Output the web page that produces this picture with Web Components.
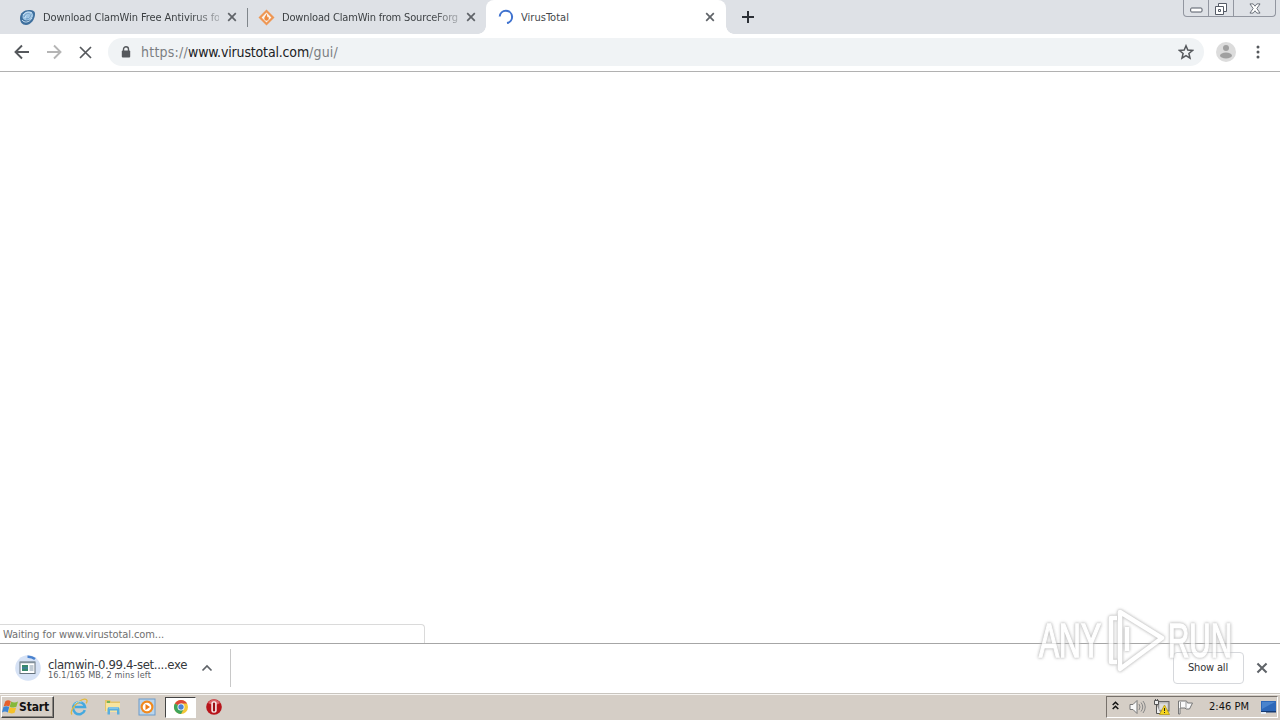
<!DOCTYPE html>
<html lang="en"><head><meta charset="utf-8"><title>VirusTotal</title>
<style>html,body{margin:0;width:1280px;height:720px;overflow:hidden;font-family:"DejaVu Sans Condensed","DejaVu Sans",sans-serif}body{font-stretch:condensed}</style></head>
<body><desktop-screen></desktop-screen>
<script>
const define=(name,html,ready)=>customElements.define(name,class extends HTMLElement{
  connectedCallback(){ if(this.shadowRoot)return;
    const t=document.createElement('template');t.innerHTML=html;
    this.attachShadow({mode:'open'}).append(t.content.cloneNode(true));
    if(ready)ready(this); }
});
/* A single line of text tracked to a given width. */
define('fit-text','<style>:host{display:block;white-space:pre;line-height:1.2}span{display:inline-block}</style><span><slot></slot></span>',el=>{
  const s=el.shadowRoot.querySelector('span'),w=+el.getAttribute('w');
  const n=el.textContent.length; const cur=s.getBoundingClientRect().width;
  s.style.letterSpacing=((w-cur)/n)+'px';
});
const icons={
 close:['0 0 10 10','<path d="M1.2 1.2 8.8 8.8M8.8 1.2 1.2 8.8" stroke="currentColor" stroke-width="1.7" fill="none"/>'],
 stop:['0 0 13 13','<path d="M1 1 12 12M12 1 1 12" stroke="currentColor" stroke-width="1.7" fill="none"/>'],
 plus:['0 0 12 12','<path d="M6 0V12M0 6H12" stroke="currentColor" stroke-width="2"/>'],
 back:['0 0 16 16','<path d="M15 8H2M8 1.5 1.5 8 8 14.5" fill="none" stroke="currentColor" stroke-width="1.9"/>'],
 forward:['0 0 16 16','<path d="M1 8H14M8 1.5 14.5 8 8 14.5" fill="none" stroke="currentColor" stroke-width="1.9"/>'],
 lock:['0 0 10 13','<path d="M2.5 5V3.3a2.5 2.5 0 0 1 5 0V5" fill="none" stroke="currentColor" stroke-width="1.4"/><rect x=".8" y="4.6" width="8.4" height="7" rx="1" fill="currentColor"/>'],
 star:['0 0 16 16','<path d="m8 1.8 1.8 4.3 4.7.4-3.6 3 1.1 4.6L8 11.6l-4 2.5 1.1-4.6-3.6-3 4.7-.4z" fill="none" stroke="currentColor" stroke-width="1.5"/>'],
 user:['0 0 20 20','<circle cx="10" cy="10" r="10" fill="#dcdcdc"/><circle cx="10" cy="6" r="3" fill="#a0a0a0"/><ellipse cx="10" cy="13.5" rx="6" ry="3" fill="#a0a0a0"/>'],
 dots:['0 0 4 14','<g fill="currentColor"><circle cx="2" cy="2" r="1.5"/><circle cx="2" cy="7" r="1.5"/><circle cx="2" cy="12" r="1.5"/></g>'],
 up:['0 0 12 8','<path d="m1.5 6.5 4.5-4.5 4.5 4.5" fill="none" stroke="currentColor" stroke-width="1.7"/>'],
 spin:['0 0 16 16','<path d="M1.7 7.5A6.2 6.2 0 1 1 9 14.1" fill="none" stroke="#3f72cf" stroke-width="2"/>'],
 clam:['0 0 17 17','<path d="M1 9C1 4 5 1 10 1c4 0 6 1 6 4 0 5-4 11-9 11-4 0-6-3-6-7z" fill="#3e6f9d"/><path d="M3.500 8c0-4 4.500-6 8.500-5 4 2 2 7-2 8-3 1-6.500 0-6.500-3z" fill="#9dc4e4"/><path d="M3 11c2 3 7 3 10-2M6 9c0-3 3-5 5-4s1 4-2 4M4 6c2-3 6-4 9-2" stroke="#d3e8f8" fill="none" stroke-width=".9"/><path d="M5 8c1-3 4-4 6-3M7 10c3 0 5-2 5-5" stroke="#5a8db9" fill="none" stroke-width=".8"/>'],
 forge:['0 0 17 17','<path d="M8.5.5 16.5 8.5l-8 8-8-8z" fill="#ee9755"/><path d="m8.5 3.6 4.9 4.9-4.9 4.9-4.9-4.9z" fill="#faf4ee"/><path d="M8.7 4.5c-.4 2-2.5 3-2.4 5 .1 1.4 1 2.2 2.2 2.2s2.4-.8 2.3-2.4c0-1-.8-1.5-1-2-.2.9-.3 1-.7 1.2.1-1.6.1-2.9-.4-4z" fill="#ee8b40"/>'],
 winflag:['0 0 17 16','<path d="M3.200 2.400c2-1.500 4-1.200 5.600-.1L7.300 7.500c-2-1.100-3.900-1-5.700.1z" fill="#e7602b"/><path d="M9.200 2.600c2 1.200 4.300 1.200 6.800 0l-1.600 5.200c-2.200 1.100-4.600 1-6.700-.1z" fill="#85b83b"/><path d="M1.400 8.100c1.900-1.100 3.800-1.100 5.800 0l-1.400 5.300c-1.900-1.100-3.900-1.100-5.900.1z" fill="#3e86d4"/><path d="M7.600 8.300c2.200 1.100 4.500 1 6.600.1l-1.600 5.300c-2.200 1.100-4.500.9-6.500-.1z" fill="#f5c12a"/>'],
 ie:['0 0 18 18','<path d="M14.800 12.200A6 6 0 1 1 15 9H5" fill="none" stroke="#45a9df" stroke-width="2.500"/><path d="M2 16.500C-.5 14 4 7 9.500 3.200 13 .8 16.500.4 17 2.500c.2 1-.3 2-.9 2.900" fill="none" stroke="#e2b93f" stroke-width="1.300"/><path d="M4.200 6.500C6 4 9 3 11.500 4" stroke="#a9e0fa" fill="none"/>'],
 folder:['0 0 18 18','<path d="M1 2h5l1 1.500h9V13H1z" fill="#e3c36a"/><path d="M2 5h14v9H2z" fill="#f7e4a0"/><path d="M3 3h3v2H3z" fill="#73b457"/><path d="M3.500 16.500V11q0-2 2-2h8q2 0 2 2v5.500H13V12.500H6v4z" fill="#5aaede"/><path d="M5 10h9" stroke="#a5d9f2"/>'],
 media:['0 0 18 18','<rect x="1" y="1" width="16" height="16" fill="#b9d5ed" stroke="#6d9ac8"/><circle cx="9" cy="9" r="6.500" fill="#f18a1f"/><circle cx="9" cy="9" r="4.300" fill="#fff"/><path d="m7.500 6 4.500 3-4.500 3z" fill="#ed7c16"/>'],
 chrome:['0 0 16 16','<circle cx="8" cy="8" r="7" fill="#f3c738"/><path d="M8 8 1.900 4.500A7 7 0 0 1 14.100 4.500H8z" fill="#dc4838"/><path d="M1.900 4.500A7 7 0 0 0 8 15l3-5.500L8 8z" fill="#3fa45b"/><circle cx="8" cy="8" r="3.500" fill="#fff"/><circle cx="8" cy="8" r="2.700" fill="#4c83d4"/>'],
 opera:['0 0 18 18','<circle cx="9" cy="9" r="7.800" fill="#b8151b"/><path d="M3 5a7 7 0 0 1 12 0c-3 2-8 2-12 0z" fill="#dc6266"/><rect x="6.300" y="3.200" width="5.400" height="11.600" rx="2.500" fill="#f8eeee"/><rect x="7.900" y="4.500" width="2.200" height="9" rx="1.100" fill="#9c1015"/>'],
 chevrons:['0 0 7 9','<path d="m.7 4 2.800-2.800L6.300 4M.7 8l2.800-2.800L6.300 8" fill="none" stroke="#111" stroke-width="1.500"/>'],
 sound:['0 0 17 16','<path d="M1 5.500h3L8 1.500v13l-4-4H1z" fill="#f8f8f8" stroke="#777"/><path d="M10 5q2 3 0 6M12 3.500q3.500 4.500 0 9M14 2q4.500 6 0 12" fill="none" stroke="#888"/>'],
 network:['0 0 17 16','<rect x="5" y="2.500" width="11" height="9.500" fill="#bbb" stroke="#666"/><path d="M6.500 4.500h8v6h-8z" fill="#ddd"/><path d="M1.500 1.500h4v4h-4zM3.500 5.500v9h4M2.500 0v2M4.500 0v2" fill="#eee" stroke="#555"/><path d="m11.500 6 5 9.500h-10z" fill="#f6d51d" stroke="#ad920b" stroke-width=".7"/><path d="M11.500 9v3M11.500 13v1" stroke="#222"/>'],
 flag:['0 0 17 16','<path d="M1.500 2v13h1.500V9h5l1 1h3.500l3-6h-5L9.500 2z" fill="#fafafa" stroke="#777"/><path d="M3.500 3v6M9 2.500V9" stroke="#999"/>'],
 monitor:['0 0 17 14','<path d="M1 1h15v10H1z" fill="#2d68b9"/><path d="M2 2h13L2 9z" fill="#4a84cd"/><path d="M1 11h15v1.500H1z" fill="#143a73"/><path d="M1 12h5v2H1z" fill="#e6edf5"/>'],
 file:['0 0 26 26','<circle cx="13" cy="13" r="12.800" fill="#d6e2f5"/><path d="M12.500 1.700A11.300 11.300 0 0 1 20 4" fill="none" stroke="#4a82cf" stroke-width="2.600"/><rect x="5" y="7" width="15" height="11.500" fill="#fff" stroke="#66737d"/><path d="M5 7.500h15" stroke="#81909a" stroke-width="1.500"/><path d="M7 10h6v6H7z" fill="#38886b"/><path d="M7 13h6" stroke="#427bb6"/><path d="M14.500 11h4M14.500 13h4M14.500 15h4" stroke="#8296a8"/>'],
 mini:['0 0 13 6','<rect x=".7" y="1" width="11.300" height="4" rx="1" fill="#fff" stroke="#555b66"/>'],
 restore:['0 0 14 14','<path d="M4.500 1.500h8v8h-8z" fill="#fff" stroke="#555b66"/><path d="M1.500 4.500h8v8h-8z" fill="#fff" stroke="#555b66"/><path d="M4.500 7.500h2v2h-2z" fill="none" stroke="#555b66"/>'],
 wclose:['0 0 13 12','<path d="M1 1h3.500l2 2.500 2-2.500H12L8.500 6l3.500 5H8.500l-2-2.500-2 2.500H1l3.500-5z" fill="#fff" stroke="#555b66" stroke-width=".9"/>']
};
define('ui-icon','<style>:host{display:block;flex:none}svg{display:block}</style><div></div>',el=>{
 const [v,p]=icons[el.getAttribute('name')];
 el.shadowRoot.querySelector('div').innerHTML=`<svg width="${el.getAttribute('w')}" height="${el.getAttribute('h')||el.getAttribute('w')}" viewBox="${v}">${p}</svg>`;
});
define('browser-tab',`<style>:host{display:flex;align-items:center;box-sizing:border-box;height:34px;width:239px;padding-left:19px;font-size:11px;color:#3c4043;position:relative}
:host([active]){background:#fff;border-radius:8px 8px 0 0;width:240px;padding-left:12px;color:#45484c}
.t{flex:1;margin-left:7px;overflow:hidden;padding-top:1px}:host(:not([active])) .t{-webkit-mask:linear-gradient(90deg,#000 148px,rgba(0,0,0,.3) 176px)}
.x{margin:0 2px 0 8px;color:#5f6368}:host([active]) .x{margin-right:11px}:host([divider])::after{content:"";position:absolute;right:-9px;top:8px;width:1px;height:19px;background:#80868b}
:host([active])::before,:host([active])::after{content:"";position:absolute;width:8px;height:8px;bottom:0;left:-8px;background:radial-gradient(circle at 0 0,transparent 7.500px,#fff 8px)}
:host([active])::after{left:100%;background:radial-gradient(circle at 100% 0,transparent 7.500px,#fff 8px)}</style><slot name="icon"></slot><div class="t"><slot></slot></div><ui-icon class="x" name="close" w="10"></ui-icon>`);
define('window-controls',`<style>:host{display:flex;box-sizing:border-box;width:93px;height:17px;border:1px solid #9296a0;border-top:0;border-radius:0 0 4px 4px;margin-left:auto;margin-right:4px;align-self:flex-start}
div{display:flex;justify-content:center;align-items:center;border-right:1px solid #9296a0;box-sizing:border-box}</style>
<div style="width:25px;padding-top:4px"><ui-icon name="mini" w="13" h="6"></ui-icon></div><div style="width:25px;padding-top:1px"><ui-icon name="restore" w="14"></ui-icon></div><div style="flex:1;border:0"><ui-icon name="wclose" w="12" h="11"></ui-icon></div>`);
define('tab-strip',`<style>:host{display:flex;height:34px;background:#dee1e6;align-items:center}</style>
<browser-tab divider><ui-icon slot="icon" name="clam" w="17"></ui-icon><fit-text w="177">Download ClamWin Free Antivirus fo</fit-text></browser-tab>
<browser-tab><ui-icon slot="icon" name="forge" w="17"></ui-icon><fit-text w="176">Download ClamWin from SourceForg</fit-text></browser-tab>
<browser-tab active style="margin-left:8px"><ui-icon slot="icon" name="spin" w="16"></ui-icon><fit-text w="48">VirusTotal</fit-text></browser-tab>
<ui-icon name="plus" w="12" style="margin-left:16px;color:#2c3036"></ui-icon><window-controls></window-controls>`);
define('browser-toolbar',`<style>:host{display:flex;align-items:center;box-sizing:border-box;height:38px;padding:0 20px 1px 14px;border-bottom:1px solid #b1b1b1;background:#fff;color:#55585c}
.omni{display:flex;align-items:center;flex:1;height:28px;border-radius:14px;background:#f0f3f5;margin:0 12px 0 16px;padding:0 10px 0 13px}
.url{display:flex;font-size:14px;margin-left:10px;color:#7b7e82;flex:1}.host{color:#202124}</style>
<ui-icon name="back" w="16"></ui-icon><ui-icon name="forward" w="16" style="margin-left:16px;color:#b5b5b5"></ui-icon><ui-icon name="stop" w="13" style="margin-left:17px"></ui-icon>
<div class="omni"><ui-icon name="lock" w="10" h="13"></ui-icon><div class="url"><fit-text w="47">https://</fit-text><fit-text class="host" w="121">www.virustotal.com</fit-text><fit-text w="29">/gui/</fit-text></div><ui-icon name="star" w="16"></ui-icon></div>
<ui-icon name="user" w="20"></ui-icon><ui-icon name="dots" w="4" h="14" style="margin-left:20px"></ui-icon>`);
define('page-view',`<style>:host{display:flex;flex:1;align-items:flex-end;background:#fff}div{box-sizing:border-box;width:425px;height:19px;border:1px solid #dadada;border-left:0;border-bottom:0;border-radius:0 4px 0 0;padding:3px 3px 0;font-size:11px;color:#707070}</style><div><fit-text w="161">Waiting for www.virustotal.com...</fit-text></div>`);
define('download-shelf',`<style>:host{display:flex;box-sizing:border-box;height:50px;border-top:1px solid #a6a6a6;align-items:center;background:#fff;padding:0 0 2px 15px;color:#5f6368}
.name{font-size:13px;color:#35383c;line-height:14px;height:12px}.meta{font-size:9px;color:#5c6064;line-height:11px}.info{margin-left:7px;width:139px;padding-top:4px}
.sep{width:1px;height:38px;background:#c8c8c8;margin-left:17px}.all{box-sizing:border-box;width:71px;height:32px;border:1px solid #d6d8dc;border-radius:4px;margin-left:auto;padding:8px 0 0 14px;font-size:11px;color:#333}</style>
<ui-icon name="file" w="26"></ui-icon><div class="info"><fit-text class="name" w="139">clamwin-0.99.4-set....exe</fit-text><fit-text class="meta" w="103">16.1/165 MB, 2 mins left</fit-text></div>
<ui-icon name="up" w="12" h="8" style="margin-left:14px"></ui-icon><div class="sep"></div><div class="all"><fit-text w="40">Show all</fit-text></div><ui-icon name="close" w="12" style="margin:0 12px 0 12px"></ui-icon>`);
define('task-bar',`<style>:host{display:flex;height:27px;box-sizing:border-box;background:#d5cec6;border-top:1px solid #c9c5bf;box-shadow:inset 0 1px #f7f5f2;align-items:center;padding:0 2px 0 1px;color:#111}
.start{display:flex;align-items:center;box-sizing:border-box;width:53px;height:22px;border:1px solid;border-color:#fff #444 #444 #fff;box-shadow:inset -1px -1px #8b8680;font-size:12px;font-weight:bold}
.chrome{display:flex;align-items:center;justify-content:center;width:31px;height:21px;box-sizing:border-box;background:#fff;border:1px solid;border-color:#444 #fff #fff #444;margin:0 9px 0 9px}
.tray{display:flex;align-items:center;margin-left:auto;width:172px;height:22px;box-sizing:border-box;border:1px solid;border-color:#77716b #fff #fff #77716b;font-size:11px;padding-left:5px}</style>
<div class="start"><ui-icon name="winflag" w="17" h="16"></ui-icon><fit-text w="30">Start</fit-text></div>
<ui-icon name="ie" w="18" style="margin-left:16px"></ui-icon><ui-icon name="folder" w="18" style="margin-left:16px"></ui-icon><ui-icon name="media" w="18" style="margin-left:16px"></ui-icon><div class="chrome"><ui-icon name="chrome" w="16"></ui-icon></div><ui-icon name="opera" w="18"></ui-icon>
<div class="tray"><ui-icon name="chevrons" w="7" h="9" style="margin-bottom:3px"></ui-icon><ui-icon name="sound" w="17" h="16" style="margin-left:10px"></ui-icon><ui-icon name="network" w="17" h="16" style="margin-left:7px"></ui-icon><ui-icon name="flag" w="17" h="16" style="margin-left:7px"></ui-icon><fit-text w="40" style="margin-left:15px">2:46 PM</fit-text><ui-icon name="monitor" w="17" h="14" style="margin-left:11px"></ui-icon></div>`);
define('water-mark',`<style>:host{position:absolute;left:1030px;top:600px;width:212px;height:80px;opacity:.75;pointer-events:none}svg{display:block;filter:drop-shadow(0 0 1.500px #aaa) drop-shadow(0 0 1px #ccc)}text{font-family:"Liberation Sans",sans-serif;font-size:48px;fill:#fff;stroke:#fff;stroke-width:1.500px}</style>
<svg width="212" height="80"><text x="9" y="57" textLength="62" lengthAdjust="spacingAndGlyphs">ANY</text><text x="138" y="57" textLength="64" lengthAdjust="spacingAndGlyphs">RUN</text><g fill="none" stroke="#fff" stroke-width="4.500" stroke-linejoin="round"><path d="M87 18H81V62H87M90 12 132 38 90 69ZM97 27V51"/></g></svg>`);
define('desktop-screen',`<style>:host{display:flex;flex-direction:column;width:1280px;height:720px;position:relative;background:#fff}</style><tab-strip></tab-strip><browser-toolbar></browser-toolbar><page-view></page-view><download-shelf></download-shelf><task-bar></task-bar><water-mark></water-mark>`);
</script></body></html>
